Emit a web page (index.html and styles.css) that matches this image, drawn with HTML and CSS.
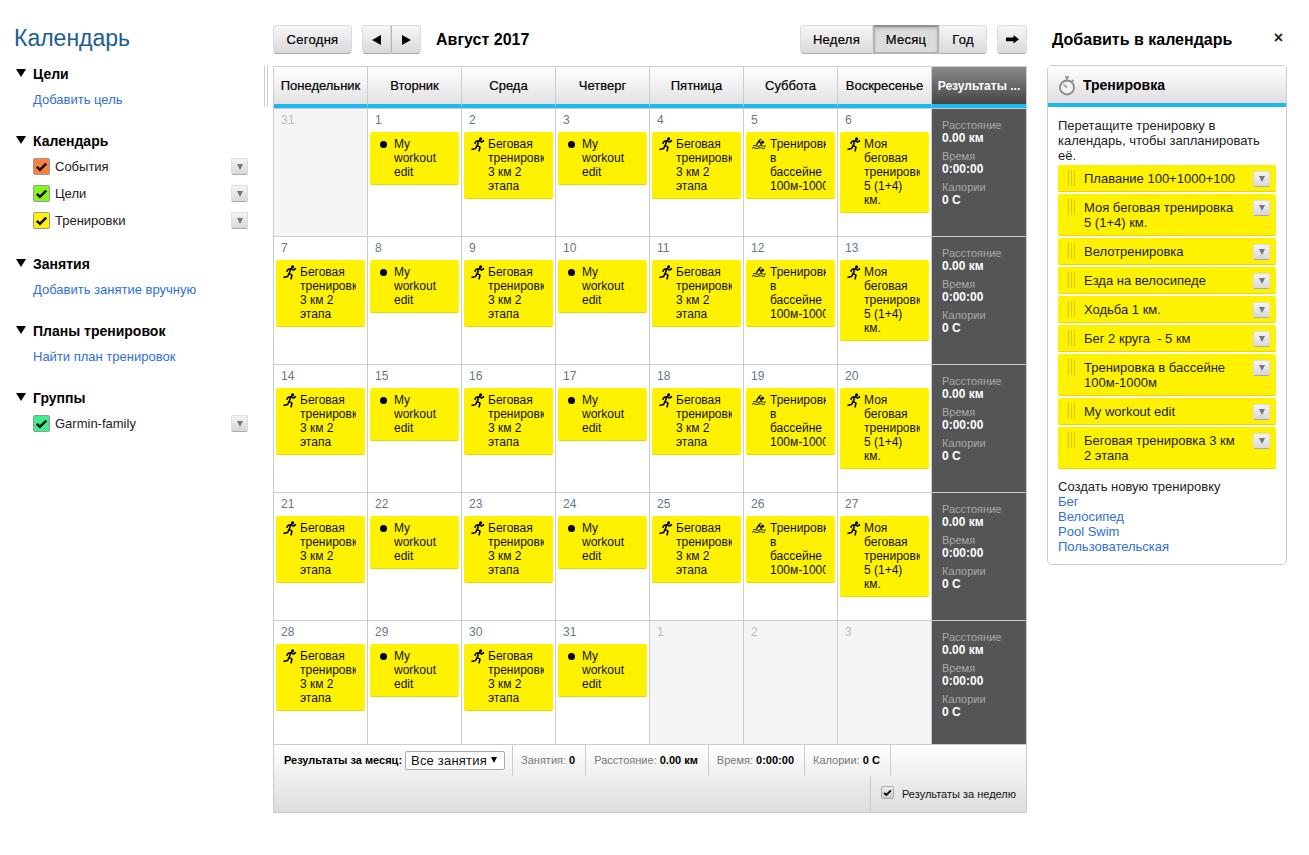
FILE: index.html
```html
<!DOCTYPE html>
<html lang="ru">
<head>
<meta charset="utf-8">
<title>Календарь</title>
<link rel="stylesheet" href="styles.css">
</head>
<body>
<svg class="defs" width="0" height="0">
  <symbol id="run" viewBox="0 0 16 16"><circle cx="11.3" cy="2" r="1.7" fill="#000"/><path d="M15 3.8 12.2 5.4 9.7 3.9 6.6 4.6 4.9 7.2M9.3 4.3 7.7 9 10.6 10.8 9.6 15.4M7.7 9 6 12.2 1.5 13.4" fill="none" stroke="#000" stroke-width="1.7" stroke-linejoin="round"/></symbol>
  <symbol id="swim" viewBox="0 0 16 12"><circle cx="11.4" cy="4.6" r="1.6" fill="#000"/><path d="M4.5 7.6 8 2.4 10 1.6M7.6 3.6 10.4 7.6" fill="none" stroke="#000" stroke-width="1.4"/><path d="M1 8.6q1.7-1 3.5 0t3.5 0 3.5 0 3.5 0M0 11q1.7-1 3.5 0t3.5 0 3.5 0 3.5 0" fill="none" stroke="#000" stroke-width="1"/></symbol>
  <symbol id="check" viewBox="0 0 16 16"><path d="M3 8.5 6.3 11.5 13 5" fill="none" stroke="#000" stroke-width="2.6"/></symbol>
</svg>

<aside class="sidebar">
  <h1 class="page-title">Календарь</h1>

  <section class="side-section">
    <h2 class="side-head"><span class="tri"></span>Цели</h2>
    <a class="side-link" href="#">Добавить цель</a>
  </section>

  <section class="side-section tight">
    <h2 class="side-head"><span class="tri"></span>Календарь</h2>
    <ul class="side-list">
      <li class="side-item"><span class="cb orange"><svg><use href="#check"/></svg></span><span class="side-label">События</span><span class="mini"></span></li>
      <li class="side-item"><span class="cb green"><svg><use href="#check"/></svg></span><span class="side-label">Цели</span><span class="mini"></span></li>
      <li class="side-item"><span class="cb yellow"><svg><use href="#check"/></svg></span><span class="side-label">Тренировки</span><span class="mini"></span></li>
    </ul>
  </section>

  <section class="side-section">
    <h2 class="side-head"><span class="tri"></span>Занятия</h2>
    <a class="side-link" href="#">Добавить занятие вручную</a>
  </section>

  <section class="side-section">
    <h2 class="side-head"><span class="tri"></span>Планы тренировок</h2>
    <a class="side-link" href="#">Найти план тренировок</a>
  </section>

  <section class="side-section">
    <h2 class="side-head"><span class="tri"></span>Группы</h2>
    <ul class="side-list">
      <li class="side-item"><span class="cb mint"><svg><use href="#check"/></svg></span><span class="side-label">Garmin-family</span><span class="mini"></span></li>
    </ul>
  </section>
</aside>

<main class="main">
  <div class="toolbar">
    <button class="btn today">Сегодня</button>
    <div class="btn-group nav">
      <button class="btn seg"><span class="arrow-l"></span></button>
      <button class="btn seg"><span class="arrow-r"></span></button>
    </div>
    <div class="month-title">Август 2017</div>
    <div class="btn-group views">
      <button class="btn seg week">Неделя</button>
      <button class="btn seg month active">Месяц</button>
      <button class="btn seg year">Год</button>
    </div>
    <button class="btn share"><svg width="13" height="9" viewBox="0 0 13 9"><path d="M0 2.5h7.5V0L13 4.3 7.5 8.6V6.2H0z" fill="#000"/></svg></button>
  </div>

  <div class="calendar">
    <div class="splitter"></div>
    <div class="cal-head">
      <div class="dow">Понедельник</div><div class="dow">Вторник</div><div class="dow">Среда</div><div class="dow">Четверг</div><div class="dow">Пятница</div><div class="dow">Суббота</div><div class="dow">Воскресенье</div><div class="dow totals">Результаты ...</div>
    </div>

    <div class="cal-grid">
      <!-- week 1 -->
      <div class="day off"><div class="num">31</div></div>
      <div class="day"><div class="num">1</div><div class="ev"><span class="ev-ic"><i class="dot"></i></span><span class="ev-t">My workout edit</span></div></div>
      <div class="day"><div class="num">2</div><div class="ev"><span class="ev-ic"><svg class="i-run"><use href="#run"/></svg></span><span class="ev-t">Беговая тренировка 3 км 2 этапа</span></div></div>
      <div class="day"><div class="num">3</div><div class="ev"><span class="ev-ic"><i class="dot"></i></span><span class="ev-t">My workout edit</span></div></div>
      <div class="day"><div class="num">4</div><div class="ev"><span class="ev-ic"><svg class="i-run"><use href="#run"/></svg></span><span class="ev-t">Беговая тренировка 3 км 2 этапа</span></div></div>
      <div class="day"><div class="num">5</div><div class="ev"><span class="ev-ic"><svg class="i-swim"><use href="#swim"/></svg></span><span class="ev-t">Тренировка в бассейне 100м-1000м</span></div></div>
      <div class="day"><div class="num">6</div><div class="ev"><span class="ev-ic"><svg class="i-run"><use href="#run"/></svg></span><span class="ev-t">Моя беговая тренировка 5 (1+4) км.</span></div></div>
      <div class="sum"><dl><dt>Расстояние</dt><dd>0.00 км</dd><dt>Время</dt><dd>0:00:00</dd><dt>Калории</dt><dd>0 C</dd></dl></div>
      <!-- week 2 -->
      <div class="day"><div class="num">7</div><div class="ev"><span class="ev-ic"><svg class="i-run"><use href="#run"/></svg></span><span class="ev-t">Беговая тренировка 3 км 2 этапа</span></div></div>
      <div class="day"><div class="num">8</div><div class="ev"><span class="ev-ic"><i class="dot"></i></span><span class="ev-t">My workout edit</span></div></div>
      <div class="day"><div class="num">9</div><div class="ev"><span class="ev-ic"><svg class="i-run"><use href="#run"/></svg></span><span class="ev-t">Беговая тренировка 3 км 2 этапа</span></div></div>
      <div class="day"><div class="num">10</div><div class="ev"><span class="ev-ic"><i class="dot"></i></span><span class="ev-t">My workout edit</span></div></div>
      <div class="day"><div class="num">11</div><div class="ev"><span class="ev-ic"><svg class="i-run"><use href="#run"/></svg></span><span class="ev-t">Беговая тренировка 3 км 2 этапа</span></div></div>
      <div class="day"><div class="num">12</div><div class="ev"><span class="ev-ic"><svg class="i-swim"><use href="#swim"/></svg></span><span class="ev-t">Тренировка в бассейне 100м-1000м</span></div></div>
      <div class="day"><div class="num">13</div><div class="ev"><span class="ev-ic"><svg class="i-run"><use href="#run"/></svg></span><span class="ev-t">Моя беговая тренировка 5 (1+4) км.</span></div></div>
      <div class="sum"><dl><dt>Расстояние</dt><dd>0.00 км</dd><dt>Время</dt><dd>0:00:00</dd><dt>Калории</dt><dd>0 C</dd></dl></div>
      <!-- week 3 -->
      <div class="day"><div class="num">14</div><div class="ev"><span class="ev-ic"><svg class="i-run"><use href="#run"/></svg></span><span class="ev-t">Беговая тренировка 3 км 2 этапа</span></div></div>
      <div class="day"><div class="num">15</div><div class="ev"><span class="ev-ic"><i class="dot"></i></span><span class="ev-t">My workout edit</span></div></div>
      <div class="day"><div class="num">16</div><div class="ev"><span class="ev-ic"><svg class="i-run"><use href="#run"/></svg></span><span class="ev-t">Беговая тренировка 3 км 2 этапа</span></div></div>
      <div class="day"><div class="num">17</div><div class="ev"><span class="ev-ic"><i class="dot"></i></span><span class="ev-t">My workout edit</span></div></div>
      <div class="day"><div class="num">18</div><div class="ev"><span class="ev-ic"><svg class="i-run"><use href="#run"/></svg></span><span class="ev-t">Беговая тренировка 3 км 2 этапа</span></div></div>
      <div class="day"><div class="num">19</div><div class="ev"><span class="ev-ic"><svg class="i-swim"><use href="#swim"/></svg></span><span class="ev-t">Тренировка в бассейне 100м-1000м</span></div></div>
      <div class="day"><div class="num">20</div><div class="ev"><span class="ev-ic"><svg class="i-run"><use href="#run"/></svg></span><span class="ev-t">Моя беговая тренировка 5 (1+4) км.</span></div></div>
      <div class="sum"><dl><dt>Расстояние</dt><dd>0.00 км</dd><dt>Время</dt><dd>0:00:00</dd><dt>Калории</dt><dd>0 C</dd></dl></div>
      <!-- week 4 -->
      <div class="day"><div class="num">21</div><div class="ev"><span class="ev-ic"><svg class="i-run"><use href="#run"/></svg></span><span class="ev-t">Беговая тренировка 3 км 2 этапа</span></div></div>
      <div class="day"><div class="num">22</div><div class="ev"><span class="ev-ic"><i class="dot"></i></span><span class="ev-t">My workout edit</span></div></div>
      <div class="day"><div class="num">23</div><div class="ev"><span class="ev-ic"><svg class="i-run"><use href="#run"/></svg></span><span class="ev-t">Беговая тренировка 3 км 2 этапа</span></div></div>
      <div class="day"><div class="num">24</div><div class="ev"><span class="ev-ic"><i class="dot"></i></span><span class="ev-t">My workout edit</span></div></div>
      <div class="day"><div class="num">25</div><div class="ev"><span class="ev-ic"><svg class="i-run"><use href="#run"/></svg></span><span class="ev-t">Беговая тренировка 3 км 2 этапа</span></div></div>
      <div class="day"><div class="num">26</div><div class="ev"><span class="ev-ic"><svg class="i-swim"><use href="#swim"/></svg></span><span class="ev-t">Тренировка в бассейне 100м-1000м</span></div></div>
      <div class="day"><div class="num">27</div><div class="ev"><span class="ev-ic"><svg class="i-run"><use href="#run"/></svg></span><span class="ev-t">Моя беговая тренировка 5 (1+4) км.</span></div></div>
      <div class="sum"><dl><dt>Расстояние</dt><dd>0.00 км</dd><dt>Время</dt><dd>0:00:00</dd><dt>Калории</dt><dd>0 C</dd></dl></div>
      <!-- week 5 -->
      <div class="day last"><div class="num">28</div><div class="ev"><span class="ev-ic"><svg class="i-run"><use href="#run"/></svg></span><span class="ev-t">Беговая тренировка 3 км 2 этапа</span></div></div>
      <div class="day last"><div class="num">29</div><div class="ev"><span class="ev-ic"><i class="dot"></i></span><span class="ev-t">My workout edit</span></div></div>
      <div class="day last"><div class="num">30</div><div class="ev"><span class="ev-ic"><svg class="i-run"><use href="#run"/></svg></span><span class="ev-t">Беговая тренировка 3 км 2 этапа</span></div></div>
      <div class="day last"><div class="num">31</div><div class="ev"><span class="ev-ic"><i class="dot"></i></span><span class="ev-t">My workout edit</span></div></div>
      <div class="day last off"><div class="num">1</div></div>
      <div class="day last off"><div class="num">2</div></div>
      <div class="day last off"><div class="num">3</div></div>
      <div class="sum last"><dl><dt>Расстояние</dt><dd>0.00 км</dd><dt>Время</dt><dd>0:00:00</dd><dt>Калории</dt><dd>0 C</dd></dl></div>
    </div>

    <div class="cal-foot">
      <div class="foot-row">
        <div class="foot-cell first"><b>Результаты за месяц:</b><span class="select">Все занятия<i class="sel-tri"></i></span></div>
        <div class="foot-cell">Занятия: <b>0</b></div>
        <div class="foot-cell">Расстояние: <b>0.00 км</b></div>
        <div class="foot-cell">Время: <b>0:00:00</b></div>
        <div class="foot-cell">Калории: <b>0 C</b></div>
      </div>
      <div class="foot-row end">
        <div class="foot-week"><span class="cb-small"><svg><use href="#check"/></svg></span>Результаты за неделю</div>
      </div>
    </div>
  </div>
</main>

<aside class="right">
  <div class="right-head"><span>Добавить в календарь</span><span class="close">×</span></div>
  <div class="panel">
    <div class="panel-head">
      <svg class="watch" width="18" height="20" viewBox="0 0 18 20"><path d="M7 1h4M9 1v3M14 4l1.5 1.5" fill="none" stroke="#8a8a8a" stroke-width="1.6"/><circle cx="9" cy="11.5" r="7" fill="#f2f2f2" stroke="#8a8a8a" stroke-width="1.8"/><path d="M9 11.5 5.5 8.5" stroke="#8a8a8a" stroke-width="1.2"/></svg>
      <span>Тренировка</span>
    </div>
    <div class="panel-body">
      <p class="hint">Перетащите тренировку в календарь, чтобы запланировать её.</p>
      <ul class="tpl-list">
        <li class="tpl"><i class="grip"></i><span class="tpl-t">Плавание 100+1000+100</span><span class="mini"></span></li>
        <li class="tpl"><i class="grip"></i><span class="tpl-t">Моя беговая тренировка 5 (1+4) км.</span><span class="mini"></span></li>
        <li class="tpl"><i class="grip"></i><span class="tpl-t">Велотренировка</span><span class="mini"></span></li>
        <li class="tpl"><i class="grip"></i><span class="tpl-t">Езда на велосипеде</span><span class="mini"></span></li>
        <li class="tpl"><i class="grip"></i><span class="tpl-t">Ходьба 1 км.</span><span class="mini"></span></li>
        <li class="tpl"><i class="grip"></i><span class="tpl-t">Бег 2 круга&nbsp; - 5 км</span><span class="mini"></span></li>
        <li class="tpl"><i class="grip"></i><span class="tpl-t">Тренировка в бассейне 100м-1000м</span><span class="mini"></span></li>
        <li class="tpl"><i class="grip"></i><span class="tpl-t">My workout edit</span><span class="mini"></span></li>
        <li class="tpl"><i class="grip"></i><span class="tpl-t">Беговая тренировка 3 км 2 этапа</span><span class="mini"></span></li>
      </ul>
      <div class="create">
        <div>Создать новую тренировку</div>
        <a href="#">Бег</a>
        <a href="#">Велосипед</a>
        <a href="#">Pool Swim</a>
        <a href="#">Пользовательская</a>
      </div>
    </div>
  </div>
</aside>
</body>
</html>
```

FILE: styles.css
```css
* { box-sizing: border-box; }
html, body { height: 100%; }
body {
  margin: 0;
  display: flex;
  align-items: flex-start;
  font-family: "Liberation Sans", Arial, sans-serif;
  font-size: 12px;
  color: #000;
  background: #fff;
}
.defs { position: absolute; }
a { color: #2f6fd6; text-decoration: none; }
ul { list-style: none; margin: 0; padding: 0; }

/* sidebar */
.sidebar { width: 273px; flex: none; padding: 24px 25px 0 14px; }
.page-title { margin: 0 0 12px; font-size: 23px; line-height: 28px; font-weight: 400; color: #1b5e92; }
.side-section { margin-bottom: 21px; }
.side-section.tight { margin-bottom: 20px; }
.side-head { display: flex; align-items: center; margin: 0 0 6px; font-size: 14px; line-height: 20px; font-weight: 700; height: 20px; }
.tri { width: 0; height: 0; border-left: 5px solid transparent; border-right: 5px solid transparent; border-top: 8px solid #000; margin: -3px 7px 0 2px; }
.side-link { display: block; margin-left: 19px; line-height: 20px; font-size: 13px; }
.side-list { margin: -4px 0 0 19px; }
.side-item { display: flex; align-items: center; height: 27px; }
.side-label { flex: 1; margin-left: 5px; color: #222; font-size: 13px; }
.cb { width: 17px; height: 17px; border: 1px solid #999; border-radius: 2px; display: block; }
.cb svg { display: block; width: 15px; height: 15px; }
.orange { background: #ff7f3f; }
.green { background: #84f51e; }
.yellow { background: #fff200; }
.mint { background: #3bf08c; }
.mini {
  flex: none;
  width: 17px;
  height: 17px;
  border-radius: 2px;
  border: 1px solid #ddd;
  border-bottom-color: #aaa;
  background: linear-gradient(#f4f4f4, #d8d8d8);
  display: flex;
  align-items: center;
  justify-content: center;
}
.mini::before { content: ""; border-left: 3px solid transparent; border-right: 3px solid transparent; border-top: 6px solid #777; }

/* main */
.main { width: 754px; flex: none; padding-top: 25px; }
.toolbar { display: flex; align-items: center; height: 29px; margin-bottom: 12px; }
.btn {
  height: 29px;
  padding: 0;
  font: 13px/1 "Liberation Sans", Arial, sans-serif;
  letter-spacing: .3px;
  -webkit-text-stroke: .2px #000;
  color: #000;
  background: linear-gradient(#f7f7f7, #d9d9d9);
  border: 1px solid #ddd;
  border-bottom: 1px solid #a9a9a9;
  border-radius: 4px;
  display: flex;
  align-items: center;
  justify-content: center;
}
.today { width: 79px; }
.btn-group { display: flex; }
.btn-group .seg { border-radius: 0; }
.btn-group .seg:first-child { border-radius: 4px 0 0 4px; }
.btn-group .seg:last-child { border-radius: 0 4px 4px 0; }
.nav { margin-left: 10px; }
.nav .seg { width: 29px; }
.nav .seg + .seg { width: 30px; border-left: 1px solid #b5b5b5; }
.arrow-l { border-top: 5.5px solid transparent; border-bottom: 5.5px solid transparent; border-right: 9px solid #000; }
.arrow-r { border-top: 5.5px solid transparent; border-bottom: 5.5px solid transparent; border-left: 9px solid #000; }
.month-title { margin-left: 15px; font-size: 16px; font-weight: 700; flex: 1; }
.week { width: 73px; }
.month { width: 66px; }
.year { width: 48px; }
.btn.active { background: #dcdcdc; border: 2px solid #b4b4b4; border-top-color: #8f8f8f; box-shadow: inset 0 2px 3px #bbb; }
.share { width: 30px; margin-left: 10px; }

.calendar { position: relative; border: 1px solid #ccc; }
.splitter { position: absolute; left: -10px; top: -1px; width: 4px; height: 41px; border-left: 1px solid #ccc; border-right: 1px solid #ccc; }
.cal-head { display: grid; grid-template-columns: repeat(8, 94px); height: 42px; border-bottom: 1px solid #ccc; }
.dow {
  display: flex;
  align-items: center;
  justify-content: center;
  white-space: nowrap;
  font-size: 13px;
  -webkit-text-stroke: .2px #000;
  color: #000;
  background: linear-gradient(#fff, #e2e2e2);
  border-right: 1px solid #ccc;
  border-bottom: 4px solid #1cb8f2;
}
.dow.totals { font-weight: 700; font-size: 12px; color: #fff; -webkit-text-stroke: 0; background: linear-gradient(#8a8a8a, #454545); border-right: 0; }

.cal-grid { display: grid; grid-template-columns: repeat(8, 94px); grid-template-rows: repeat(4, 128px) 124px; }
.day { border-right: 1px solid #ccc; border-bottom: 1px solid #ccc; padding: 0 2px; overflow: hidden; }
.day.off { background: #f5f5f5; }
.num { height: 23px; padding: 4px 0 0 5px; line-height: 14px; color: #62798a; }
.off .num { color: #bbb; }
.ev { display: flex; background: #fff200; border-radius: 2px; border-bottom: 1px solid #e6d900; padding: 5px 9px 5px 0; line-height: 14px; color: #111; }
.ev-ic { flex: none; width: 24px; position: relative; }
.ev-t { flex: 1; min-width: 0; overflow: hidden; }
.dot { display: block; width: 7px; height: 7px; border-radius: 50%; background: #000; margin: 4px 0 0 10px; }
.i-run { display: block; width: 15px; height: 15px; margin: 0 0 0 6px; }
.i-swim { display: block; width: 15px; height: 11px; margin: 1px 0 0 6px; }
.sum { background: #555; border-bottom: 1px solid #ccc; padding: 10px 0 0 10px; }
.sum dl { margin: 0; }
.sum dt { font-size: 11px; line-height: 13px; color: #aaa; }
.sum dd { margin: 0 0 6px; font-size: 12px; line-height: 12px; font-weight: 700; color: #fff; }

.cal-foot { background: linear-gradient(#fff, #dcdcdc); height: 67px; font-size: 11px; color: #777; }
.foot-row { display: flex; height: 31px; }
.foot-row.end { height: 35px; justify-content: flex-end; }
.foot-cell { line-height: 31px; padding: 0 10px 0 8px; border-right: 1px solid #ccc; white-space: pre; }
.foot-cell b { color: #000; }
.foot-cell.first { display: flex; align-items: center; gap: 3px; padding: 0 7px 0 10px; }
.select {
  display: flex;
  align-items: center;
  justify-content: space-between;
  width: 100px;
  height: 19px;
  padding: 0 7px 0 5px;
  background: #fff;
  border: 1px solid #aaa;
  border-radius: 2px;
  font-size: 13px;
  letter-spacing: .2px;
  font-weight: 400;
  color: #111;
}
.sel-tri { border-left: 3px solid transparent; border-right: 3px solid transparent; border-top: 6px solid #000; margin-top: -2px; }
.foot-week { width: 156px; display: flex; align-items: center; padding-left: 10px; border-left: 1px solid #ccc; color: #111; }
.cb-small { width: 13px; height: 13px; border: 1px solid #aaa; border-radius: 2px; background: linear-gradient(#eee, #ccc); margin: -3px 8px 0 0; }
.cb-small svg { display: block; width: 11px; height: 11px; }

/* right */
.right { width: 240px; flex: none; margin-left: 20px; padding-top: 30px; }
.right-head { display: flex; justify-content: space-between; align-items: center; height: 20px; padding: 0 4px 0 5px; margin-bottom: 15px; font-size: 16px; font-weight: 700; }
.close { font-size: 16px; color: #222; margin-top: -4px; }
.panel { border: 1px solid #ccc; border-radius: 5px; height: 500px; }
.panel-head { display: flex; align-items: center; height: 41px; padding: 0 0 0 10px; gap: 7px; font-size: 14px; font-weight: 700; background: linear-gradient(#fff, #dedede); border-bottom: 4px solid #1cb8f2; border-radius: 4px 4px 0 0; }
.watch { display: block; margin-top: 3px; }
.panel-body { padding: 11px 10px 0; line-height: 15px; font-size: 13px; color: #222; }
.hint { margin: 0 0 2px; }
.tpl { display: flex; align-items: flex-start; background: #fff200; border-radius: 2px; border-bottom: 1px solid #e6d900; padding: 6px 6px 5px 10px; margin-bottom: 2px; color: #222; }
.grip { flex: none; width: 7px; height: 16px; margin: -1px 9px 0 0; background: repeating-linear-gradient(90deg, #d8ca00 0 1px, transparent 1px 3px); }
.tpl-t { flex: 1; margin-right: 10px; }
.tpl .mini { height: 16px; margin-bottom: -1px; }
.create { margin-top: 10px; }
.create a { display: block; }
```
